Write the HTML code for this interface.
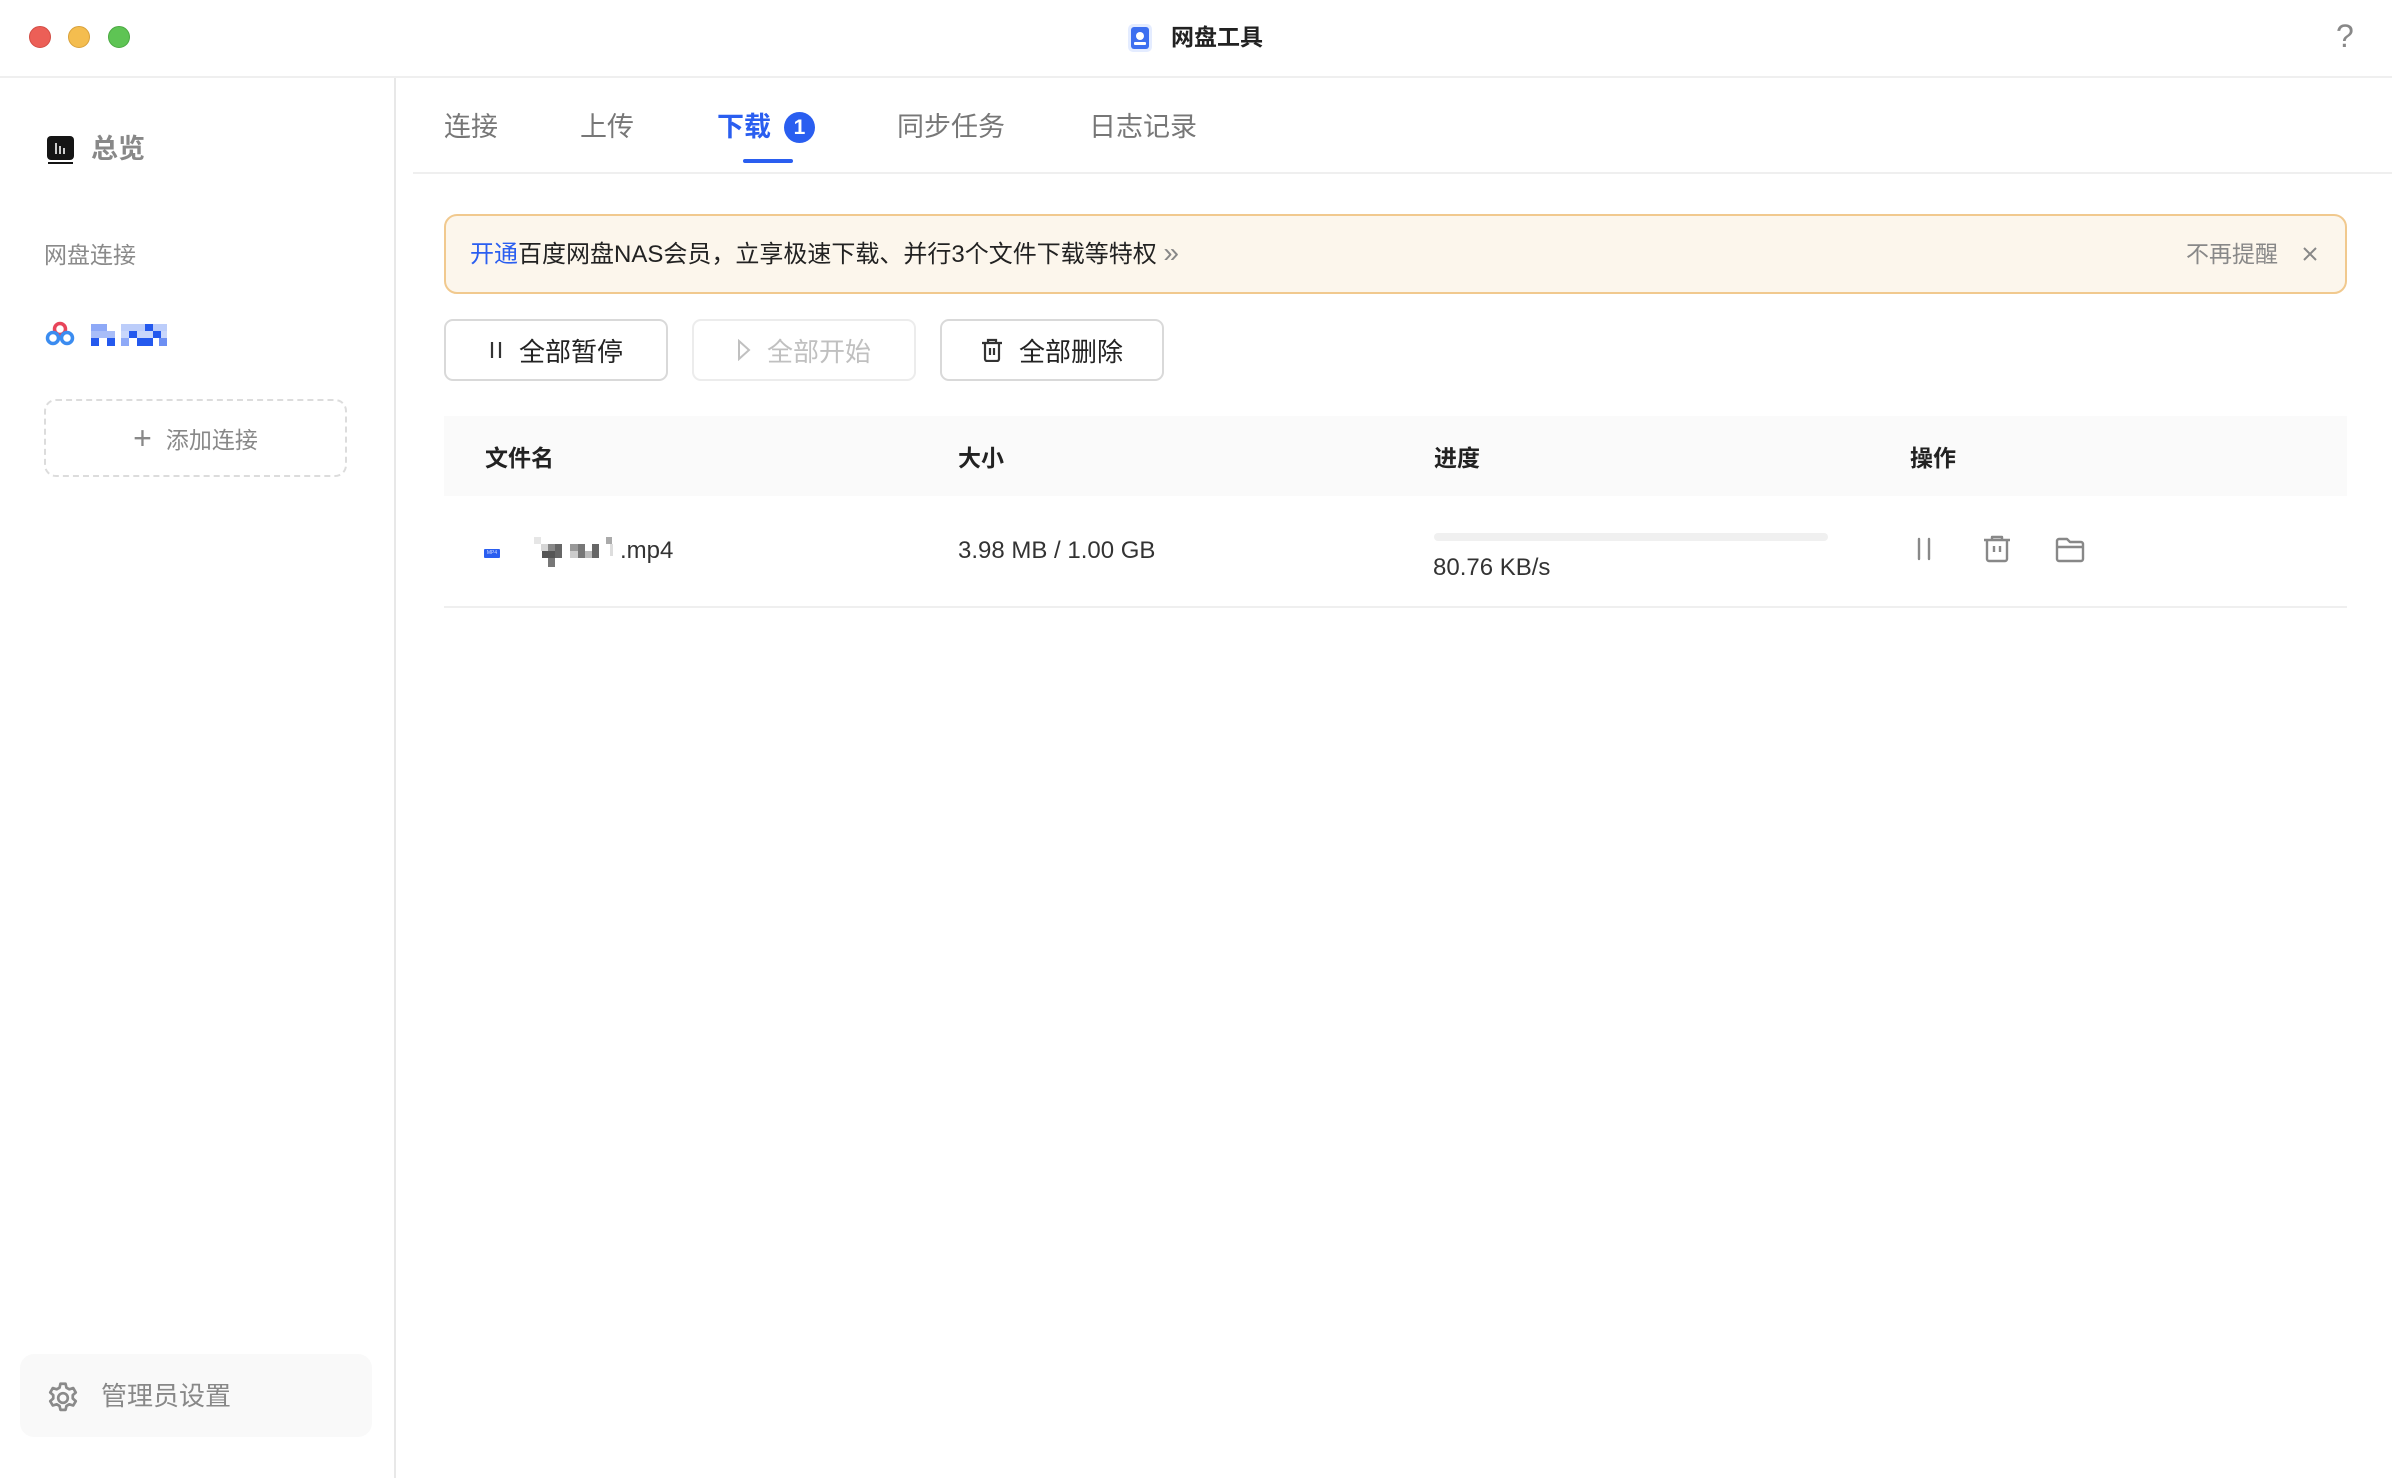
<!DOCTYPE html><html><head><meta charset="utf-8"><style>
*{margin:0;padding:0;box-sizing:border-box}
body{width:2392px;height:1478px;background:#fff;font-family:"Liberation Sans","Noto Sans CJK SC",sans-serif;position:relative;overflow:hidden;color:#222}
.a{position:absolute;white-space:nowrap}
.dot{position:absolute;width:22px;height:22px;border-radius:50%;top:26px}
.btn{position:absolute;top:319px;height:62px;border:2px solid #d9d9d9;border-radius:9px;font-size:26px;display:flex;align-items:center;justify-content:center;gap:16px;color:#222}
.th{position:absolute;top:456px;transform:translateY(-50%);font-size:23px;font-weight:bold;color:#222}
</style></head><body>
<div class="dot" style="left:29px;background:#ec5f57;border:1px solid #d34c44"></div>
<div class="dot" style="left:68px;background:#f4bd4f;border:1px solid #d9a13a"></div>
<div class="dot" style="left:108px;background:#5ec454;border:1px solid #4aa941"></div>
<svg class="a" style="left:1126px;top:23px" width="28" height="30" viewBox="0 0 28 30"><rect x="2" y="1" width="24" height="28" rx="5" fill="#e4ecff"/><rect x="5" y="4" width="18" height="22" rx="3" fill="#3d6ff0"/><circle cx="14" cy="13" r="4" fill="#fff"/><rect x="8" y="19" width="12" height="3" rx="1" fill="#fff"/></svg>
<div class="a" style="left:1171px;top:22px;font-size:23px;font-weight:bold;line-height:30px">网盘工具</div>
<div class="a" style="left:2336px;top:18px;font-size:32px;color:#888">?</div>
<div class="a" style="left:0;top:76px;width:2392px;height:2px;background:#efefef"></div>
<div class="a" style="left:394px;top:78px;width:2px;height:1400px;background:#e8e8e8"></div>
<svg class="a" style="left:47px;top:136px" width="27" height="28" viewBox="0 0 27 28"><rect x="0" y="0" width="27" height="24" rx="4" fill="#151515"/><rect x="1" y="26" width="25" height="2" fill="#151515"/><rect x="8" y="7" width="2" height="11" fill="#ccc"/><rect x="12" y="10" width="2" height="8" fill="#ccc"/><rect x="16" y="12" width="2" height="6" fill="#ccc"/></svg>
<div class="a" style="left:91px;top:131px;font-size:27px;font-weight:bold;color:#888;line-height:36px">总览</div>
<div class="a" style="left:44px;top:239px;font-size:23px;color:#8a8a8a;line-height:32px">网盘连接</div>
<svg class="a" style="left:45px;top:321px" width="30" height="26" viewBox="0 0 30 26"><circle cx="15" cy="8" r="5.5" fill="none" stroke="#e8455a" stroke-width="3.5"/><circle cx="8" cy="17" r="5.5" fill="none" stroke="#3b8cf0" stroke-width="3.5"/><circle cx="22" cy="17" r="5.5" fill="none" stroke="#3b8cf0" stroke-width="3.5"/></svg>
<svg class="a" style="left:91px;top:324px" width="76" height="22" viewBox="0 0 76 22"><g fill="#8ea9f7"><rect x="0" y="0" width="16" height="7"/><rect x="0" y="7" width="24" height="7" fill="#a8bdf8"/><rect x="30" y="0" width="46" height="7" fill="#bccdfa"/><rect x="30" y="7" width="46" height="7" fill="#c8d6fb"/></g><g fill="#2459ee"><rect x="0" y="14" width="8" height="8"/><rect x="16" y="14" width="8" height="8"/><rect x="38" y="7" width="8" height="7"/><rect x="46" y="14" width="16" height="8"/><rect x="54" y="0" width="8" height="7"/><rect x="62" y="7" width="8" height="7"/><rect x="68" y="14" width="8" height="8" fill="#6d8ff3"/><rect x="30" y="14" width="8" height="8" fill="#8ea9f7"/></g></svg>
<div class="a" style="left:44px;top:399px;width:303px;height:78px;border:2px dashed #dcdcdc;border-radius:12px;display:flex;align-items:center;justify-content:center;font-size:23px;color:#888"><span style="font-size:32px;font-weight:300;margin-right:14px;line-height:30px">+</span>添加连接</div>
<div class="a" style="left:20px;top:1354px;width:352px;height:83px;background:#f9f9f9;border-radius:14px"></div>
<svg class="a" style="left:45px;top:1380px" width="36" height="36" viewBox="0 0 24 24" fill="none" stroke="#8a8a8a" stroke-width="1.8"><circle cx="12" cy="12" r="3.2"/><path d="M10.3 2.5h3.4l.6 2.6 1.9 1.1 2.6-.8 1.7 2.9-2 1.8v2.2l2 1.8-1.7 2.9-2.6-.8-1.9 1.1-.6 2.6h-3.4l-.6-2.6-1.9-1.1-2.6.8-1.7-2.9 2-1.8v-2.2l-2-1.8 1.7-2.9 2.6.8 1.9-1.1z" stroke-linejoin="round"/></svg>
<div class="a" style="left:101px;top:1378px;font-size:26px;color:#888;line-height:36px">管理员设置</div>
<div class="a" style="left:444px;top:108px;font-size:27px;color:#777;line-height:38px">连接</div>
<div class="a" style="left:580px;top:108px;font-size:27px;color:#777;line-height:38px">上传</div>
<div class="a" style="left:717px;top:108px;font-size:27px;color:#2a5ef0;line-height:38px;font-weight:bold">下载</div>
<div class="a" style="left:784px;top:112px;width:31px;height:31px;border-radius:50%;background:#2a5ef0;color:#fff;font-size:21px;text-align:center;line-height:31px;font-weight:bold">1</div>
<div class="a" style="left:897px;top:108px;font-size:27px;color:#777;line-height:38px">同步任务</div>
<div class="a" style="left:1089px;top:108px;font-size:27px;color:#777;line-height:38px">日志记录</div>
<div class="a" style="left:743px;top:159px;width:50px;height:4px;background:#2a5ef0;border-radius:2px"></div>
<div class="a" style="left:413px;top:172px;width:1979px;height:2px;background:#efefef"></div>
<div class="a" style="left:444px;top:214px;width:1903px;height:80px;background:#fcf6ec;border:2px solid #f1c98e;border-radius:13px"></div>
<div class="a" style="left:470px;top:237px;font-size:24px;line-height:32px;color:#222"><span style="color:#2a5ef0">开通</span>百度网盘NAS会员，立享极速下载、并行3个文件下载等特权 <span style="color:#888;font-size:28px">»</span></div>
<div class="a" style="left:2186px;top:238px;font-size:23px;line-height:32px;color:#888">不再提醒</div>
<svg class="a" style="left:2302px;top:246px" width="16" height="16" viewBox="0 0 16 16" stroke="#888" stroke-width="2"><path d="M2 2L14 14M14 2L2 14"/></svg>
<div class="btn" style="left:444px;width:224px"><svg width="14" height="20"><path d="M3 2v16M11 2v16" stroke="#333" stroke-width="2.2"/></svg>全部暂停</div>
<div class="btn" style="left:692px;width:224px;border-color:#ececec;color:#c0c0c0"><svg width="14" height="22"><path d="M2 2l10 9-10 9z" fill="none" stroke="#c0c0c0" stroke-width="2"/></svg>全部开始</div>
<div class="btn" style="left:940px;width:224px"><svg width="22" height="24" viewBox="0 0 22 24" fill="none" stroke="#333" stroke-width="2.2"><path d="M1 5h20M7 5V2h8v3M4 5v16a2 2 0 002 2h10a2 2 0 002-2V5M9 10v7M13 10v7"/></svg>全部删除</div>
<div class="a" style="left:444px;top:416px;width:1903px;height:80px;background:#fafafa"></div>
<div class="th" style="left:485px">文件名</div>
<div class="th" style="left:958px">大小</div>
<div class="th" style="left:1434px">进度</div>
<div class="th" style="left:1910px">操作</div>
<div class="a" style="left:444px;top:606px;width:1903px;height:2px;background:#efefef"></div>
<div class="a" style="left:484px;top:549px;width:16px;height:9px;background:#2a5ef0;border-radius:1px;font-size:5px;color:#cfd9ff;text-align:center;line-height:9px">MP4</div>
<svg class="a" style="left:534px;top:535px" width="80" height="33" viewBox="0 0 80 33"><rect x="0" y="2" width="7" height="7" fill="#e6e6e6"/><rect x="7" y="9" width="7" height="7" fill="#d6d6d6"/><rect x="8" y="16" width="14" height="7" fill="#555"/><rect x="14" y="9" width="7" height="7" fill="#888"/><rect x="14" y="23" width="7" height="9" fill="#777"/><rect x="21" y="9" width="7" height="14" fill="#666"/><rect x="36" y="9" width="8" height="7" fill="#999"/><rect x="36" y="16" width="8" height="7" fill="#ccc"/><rect x="44" y="9" width="7" height="14" fill="#777"/><rect x="51" y="16" width="7" height="7" fill="#bbb"/><rect x="58" y="9" width="7" height="14" fill="#666"/><rect x="72" y="2" width="6" height="7" fill="#aaa"/><rect x="76" y="9" width="3" height="12" fill="#ddd"/></svg>
<div class="a" style="left:620px;top:536px;font-size:24px;line-height:30px;color:#333">.mp4</div>
<div class="a" style="left:958px;top:536px;font-size:24px;line-height:30px;color:#333">3.98 MB / 1.00 GB</div>
<div class="a" style="left:1434px;top:533px;width:394px;height:8px;background:#f0f0f0;border-radius:4px"></div>
<div class="a" style="left:1433px;top:553px;font-size:24px;line-height:30px;color:#333">80.76 KB/s</div>
<svg class="a" style="left:1914px;top:536px" width="20" height="26"><path d="M5 3v20M15 3v20" stroke="#888" stroke-width="2.4" stroke-linecap="round"/></svg>
<svg class="a" style="left:1981px;top:534px" width="32" height="30" viewBox="0 0 32 30" fill="none" stroke="#888" stroke-width="2.4" stroke-linejoin="round"><path d="M3 6h26M11 6V3h10v3M6 6v19a2 2 0 002 2h16a2 2 0 002-2V6M13 12v6M19 12v6"/></svg>
<svg class="a" style="left:2054px;top:536px" width="32" height="28" viewBox="0 0 32 28" fill="none" stroke="#888" stroke-width="2.4" stroke-linejoin="round"><path d="M3 5a2 2 0 012-2h8l3 3h11a2 2 0 012 2v15a2 2 0 01-2 2H5a2 2 0 01-2-2zM3 11h26"/></svg>
</body></html>
